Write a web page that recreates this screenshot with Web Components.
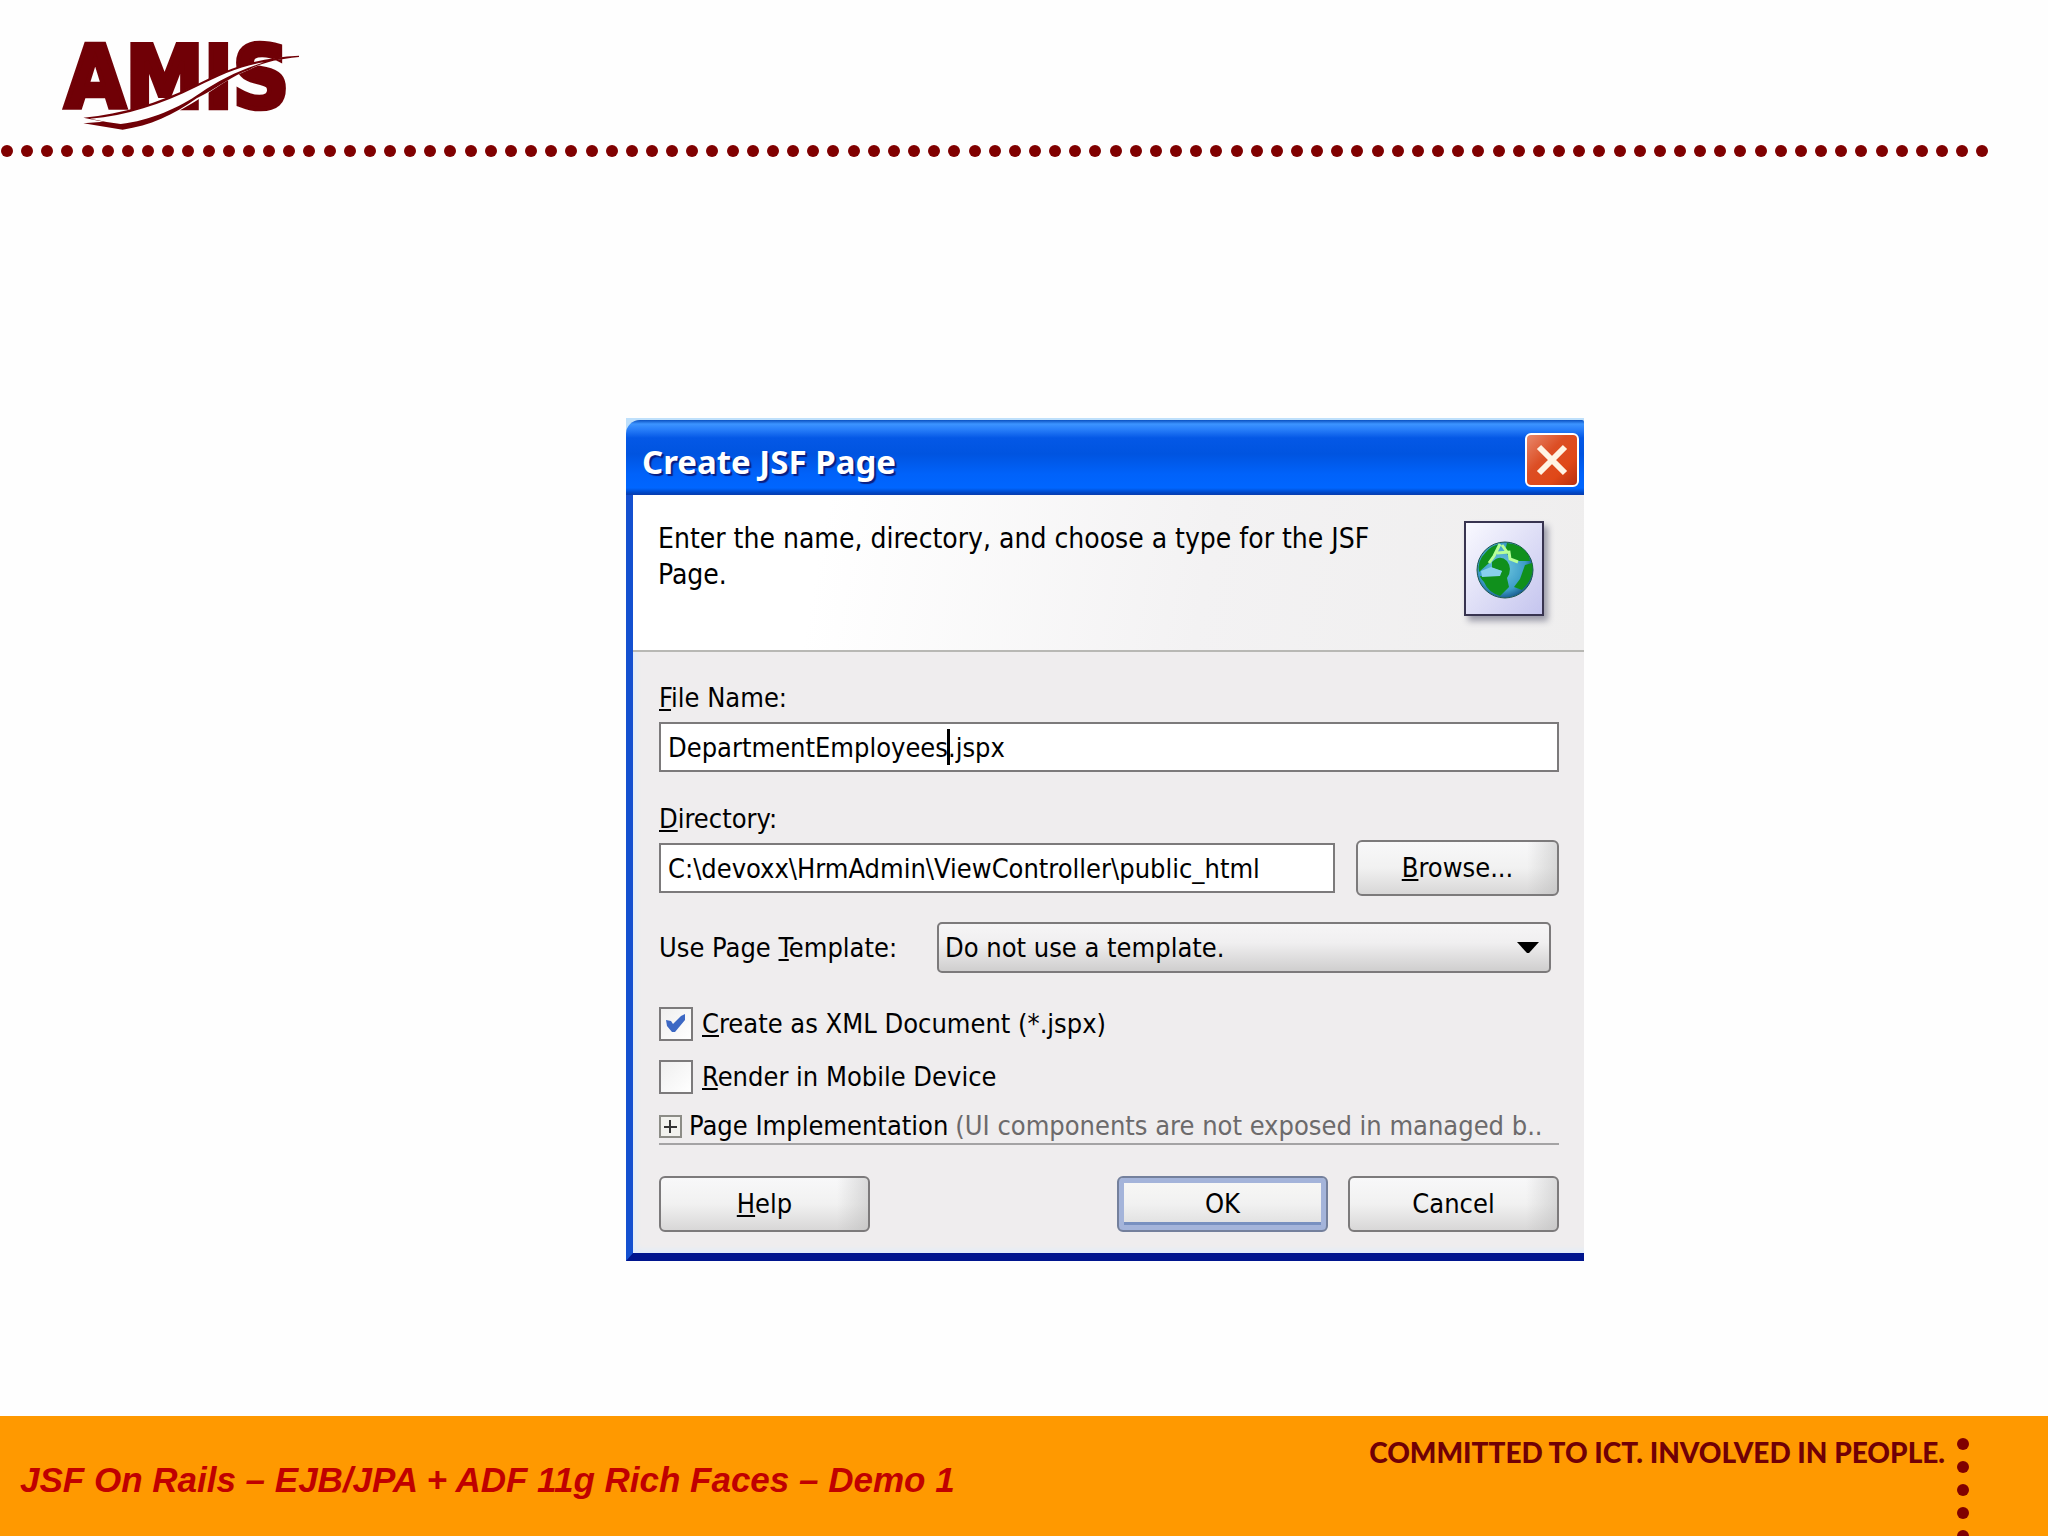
<!DOCTYPE html>
<html lang="en">
<head>
<meta charset="utf-8">
<title>JSF On Rails</title>
<style>
  body {
    margin: 0;
    min-height: 100vh;
    display: grid;
    grid-template-rows: auto 1fr auto;
    background: #fefefe;
    font-family: "Liberation Sans", Arial, sans-serif;
  }
  main {
    display: grid;
    place-items: center;
    padding: 106px 0 0 162px;
  }
</style>
</head>
<body>
  <slide-header></slide-header>
  <main>
    <xp-dialog name="Create JSF Page">
      <span slot="intro">Enter the name, directory, and choose a type for the JSF Page.</span>
      <text-field value="DepartmentEmployees.jspx" caret><u>F</u>ile Name:</text-field>
      <text-field value="C:\devoxx\HrmAdmin\ViewController\public_html"><u>D</u>irectory:
        <push-button slot="side" class="browse"><u>B</u>rowse...</push-button>
      </text-field>
      <select-field option="Do not use a template.">Use Page <u>T</u>emplate:</select-field>
      <check-field checked><u>C</u>reate as XML Document (*.jspx)</check-field>
      <check-field><u>R</u>ender in Mobile Device</check-field>
      <more-section name="Page Implementation">(UI components are not exposed in managed b..</more-section>
      <push-button slot="left"><u>H</u>elp</push-button>
      <push-button slot="right" default>OK</push-button>
      <push-button slot="right">Cancel</push-button>
    </xp-dialog>
  </main>
  <slide-footer>
    JSF On Rails – EJB/JPA + ADF 11g Rich Faces – Demo 1
    <span slot="motto">COMMITTED TO ICT. INVOLVED IN PEOPLE.</span>
  </slide-footer>

<script>
// attaches an open shadow root with the given markup
class BaseElement extends HTMLElement {
  constructor() {
    super();
    const template = document.createElement("template");
    template.innerHTML = this.constructor.html;
    this.attachShadow({ mode: "open" });
    this.shadowRoot.appendChild(template.content.cloneNode(true));
  }
  $(selector) {
    return this.shadowRoot.querySelector(selector);
  }
}

class DotLine extends BaseElement {
  static html = `
    <style>
      :host { display: flex; justify-content: space-between; }
      :host([vertical]) { flex-direction: column; justify-content: flex-start; gap: 11px; }
      i { width: 12px; height: 12px; border-radius: 50%; background: #800000; flex: none; }
    </style>
  `;
  connectedCallback() {
    const count = Number(this.getAttribute("count"));
    for (let i = 0; i < count; i++) {
      this.shadowRoot.appendChild(document.createElement("i"));
    }
  }
}

class AmisLogo extends BaseElement {
  static html = `
    <style>
      :host { display: block; }
      svg { display: block; width: 240px; height: 120px; overflow: visible; }
      text { font: bold 262px "DejaVu Sans Condensed", "DejaVu Sans", sans-serif; }
    </style>
    <svg viewBox="60 0 720 360" fill="#700006" role="img" aria-label="AMIS">
      <text x="74" y="264" stroke="#700006" stroke-width="14">AMIS</text>
      <path fill="#fefefe" d="M128 295C250 284 350 252 460 200C560 150 650 116 777 108C700 120 660 132 628 149C560 172 470 250 400 280L248 318L130 302Z"/>
      <path d="M130 293C250 282 350 250 460 198C560 148 650 112 777 107L777 111C710 118 665 128 628 149C580 165 530 205 470 235C400 285 330 318 248 329L130 310L190 305Z"/>
      <path fill="#fefefe" d="M150 296C260 286 360 254 470 200C540 165 610 135 672 127C600 150 540 178 480 220C420 262 330 303 242 312L200 306Z"/>
    </svg>
  `;
}

class SlideHeader extends BaseElement {
  static html = `
    <style>
      :host { display: block; padding-top: 20px; }
      amis-logo { margin: 0 60px 5px; }
      dot-line { margin: 0 59px 0 1px; }
    </style>
    <amis-logo></amis-logo>
    <dot-line count="99"></dot-line>
  `;
}

class SlideFooter extends BaseElement {
  static html = `
    <style>
      :host {
        display: flex;
        justify-content: space-between;
        height: 120px;
        overflow: hidden;
        background: #ff9900;
      }
      .title {
        margin: 44px 0 0 20px;
        color: #c00000;
        font: italic bold 35px/40px "Liberation Sans", sans-serif;
      }
      .right { display: flex; gap: 12px; margin: 22px 79px 0 0; }
      .motto { color: #700006; font: 900 28px/28px Lato, sans-serif; }
    </style>
    <div class="title"><slot></slot></div>
    <div class="right">
      <div class="motto"><slot name="motto"></slot></div>
      <dot-line vertical count="5"></dot-line>
    </div>
  `;
}

class XpDialog extends BaseElement {
  static html = `
    <style>
      :host {
        display: block;
        width: 100%;
        max-width: 958px;
        box-sizing: border-box;
        background: #bfe0fb;
        padding-top: 2px;
        color: #000;
        font: 27px/36px "DejaVu Sans Condensed", "DejaVu Sans", sans-serif;
      }
      .bar {
        display: flex;
        align-items: center;
        justify-content: space-between;
        height: 75px;
        box-sizing: border-box;
        padding: 4px 5px 0 16px;
        border-radius: 14px 2px 0 0;
        background: linear-gradient(#0a50c0, #3c94ff 4px, #2a80fa 9px, #0458e6 18px, #0054e0 34px, #0062fa 54px, #0066ff 68px, #0044c0 73px, #0a3cae);
      }
      h1 {
        margin: 4px 0 0;
        color: #fff;
        font: bold 33px/40px "Noto Sans", sans-serif;
        text-shadow: 2px 2px 1px #0a1e80;
      }
      .close {
        width: 54px;
        height: 54px;
        padding: 0;
        border: 2px solid #fff;
        border-radius: 6px;
        background: linear-gradient(135deg, #e8886c, #dc4e24 40%, #e04818 70%, #b83010);
      }
      .close svg { display: block; margin: auto; }
      .body {
        border: solid;
        border-width: 0 0 8px 7px;
        border-color: #001590 #001590 #00158e #1450d0;
        background: #efedee;
        box-shadow: inset 5px -5px 6px -3px #dcecfd;
      }
      .intro {
        display: flex;
        justify-content: space-between;
        height: 157px;
        padding: 26px 39px 0 25px;
        box-sizing: border-box;
        background: linear-gradient(100deg, #fff 20%, #f3f2f3 60%, #efeeee);
        border-bottom: 2px solid #b8b8b4;
      }
      .intro p { margin: 0; max-width: 740px; font-size: 28px; }
      .form { padding: 28px 25px 21px 26px; }
      .actions { display: flex; gap: 20px; margin-top: 31px; }
      .left { flex: 1; }
    </style>
    <div class="bar">
      <h1></h1>
      <button class="close" aria-label="Close">
        <svg width="36" height="36" viewBox="0 0 36 36" stroke="#fff4e4" stroke-width="6"><path d="M5 5L31 31M31 5L5 31"/></svg>
      </button>
    </div>
    <div class="body">
      <div class="intro">
        <p><slot name="intro"></slot></p>
        <page-icon></page-icon>
      </div>
      <div class="form">
        <slot></slot>
        <div class="actions">
          <div class="left"><slot name="left"></slot></div>
          <slot name="right"></slot>
        </div>
      </div>
    </div>
  `;
  connectedCallback() {
    this.$("h1").textContent = this.getAttribute("name");
  }
}

class PageIcon extends BaseElement {
  static html = `
    <style>
      :host { display: block; }
      svg { display: block; filter: drop-shadow(4px 5px 3px #9a9aa8); }
    </style>
    <svg width="81" height="96" viewBox="0 0 81 96">
      <defs>
        <linearGradient id="sheet" x1="0" y1="0" x2="1" y2="1">
          <stop offset="0" stop-color="#fafaff"/><stop offset="1" stop-color="#c4c4ee"/>
        </linearGradient>
        <radialGradient id="sea" cx=".45" cy=".45" r=".6">
          <stop offset="0" stop-color="#70c8e0"/><stop offset=".7" stop-color="#3c9cc8"/><stop offset="1" stop-color="#104c80"/>
        </radialGradient>
      </defs>
      <rect x="1" y="1" width="78" height="93" fill="url(#sheet)" stroke="#383450" stroke-width="2"/>
      <circle cx="41" cy="49" r="28" fill="url(#sea)" stroke="#1c5850" stroke-width="1"/>
      <g fill="#10901c">
        <path d="M22 31Q28 24 36 23L30 33L25 42L15 51Q13 40 22 31Z"/>
        <path d="M43 22Q58 23 65 35L66 40H48L41 30Z"/>
        <path d="M28 41Q36 33 43 40Q49 48 43 57L45 66L36 75Q24 71 20 61Q14 54 17 55H34L38 50L28 47Z"/>
        <path d="M61 44L68 42Q71 57 58 69L50 66L56 58Z"/>
      </g>
      <path d="M36 23L30 35L25 42M33 32L45 31L46 38L54 41M38 24L43 31" fill="none" stroke="#b8ff98" stroke-width="3"/>
      <path d="M17 50L27 46L38 50L36 55L18 56Z" fill="#88d0ec"/>
    </svg>
  `;
}

class TextField extends BaseElement {
  static html = `
    <style>
      :host { display: block; margin-bottom: 29px; }
      label { display: block; height: 36px; margin-bottom: 6px; }
      .row { display: flex; align-items: center; gap: 21px; height: 50px; }
      .box { flex: 1; position: relative; }
      input {
        display: block;
        width: 100%;
        height: 50px;
        box-sizing: border-box;
        padding: 0 7px;
        border: 2px solid #7c7a7b;
        border-radius: 0;
        background: #fff;
        color: #000;
        font: inherit;
      }
      .caret { display: none; position: absolute; left: 288px; top: 7px; width: 3px; height: 36px; background: #000; }
      :host([caret]) .caret { display: block; }
    </style>
    <label for="box"><slot></slot></label>
    <div class="row">
      <div class="box"><input id="box" type="text"><span class="caret"></span></div>
      <slot name="side"></slot>
    </div>
  `;
  connectedCallback() {
    this.$("input").value = this.getAttribute("value");
  }
}

class SelectField extends BaseElement {
  static html = `
    <style>
      :host { display: flex; align-items: center; margin: 0 8px 33px 0; }
      label { width: 278px; flex: none; }
      .box { flex: 1; position: relative; }
      select {
        appearance: none;
        display: block;
        width: 100%;
        height: 51px;
        box-sizing: border-box;
        padding: 0 6px;
        border: 2px solid #7c7a7b;
        border-radius: 5px;
        background: linear-gradient(#f6f5f6, #f0eff0 40%, #cfcece);
        color: #000;
        font: inherit;
      }
      svg { position: absolute; right: 12px; top: 20px; pointer-events: none; }
    </style>
    <label for="box"><slot></slot></label>
    <div class="box">
      <select id="box"><option></option></select>
      <svg width="22" height="12" viewBox="0 0 22 12"><path d="M0 0H22L12 11H10Z"/></svg>
    </div>
  `;
  connectedCallback() {
    this.$("option").textContent = this.getAttribute("option");
  }
}

class CheckField extends BaseElement {
  static html = `
    <style>
      :host { display: flex; align-items: center; gap: 9px; margin-top: 17px; }
      .box { position: relative; }
      input {
        appearance: none;
        display: block;
        width: 34px;
        height: 34px;
        margin: 0;
        border: 2px solid #7c7a7b;
        background: linear-gradient(135deg, #efefef, #fff);
      }
      svg { display: none; position: absolute; left: 7px; top: 7px; pointer-events: none; }
      input:checked + svg { display: block; }
    </style>
    <div class="box">
      <input id="box" type="checkbox">
      <svg width="20" height="19" viewBox="0 0 20 19" fill="#3c68c4"><path d="M0 6L5 7L7 10L15 2L19 0V6L9 18H6L1 12Z"/></svg>
    </div>
    <label for="box"><slot></slot></label>
  `;
  connectedCallback() {
    this.$("input").checked = this.hasAttribute("checked");
  }
}

class MoreSection extends BaseElement {
  static html = `
    <style>
      :host { display: block; margin-top: 14px; }
      summary {
        display: flex;
        align-items: center;
        gap: 7px;
        height: 34px;
        border-bottom: 2px solid #a4a3a4;
        white-space: nowrap;
      }
      .hint { color: #6c6a6b; }
    </style>
    <details>
      <summary>
        <svg width="23" height="23" viewBox="0 0 23 23" fill="none">
          <rect x="1" y="1" width="21" height="21" fill="#f2f2ee" stroke="#8c8c86" stroke-width="2"/>
          <path d="M5 12H18M11 5V18" stroke="#333" stroke-width="2"/>
        </svg>
        <span class="name"></span>
        <span class="hint"><slot></slot></span>
      </summary>
    </details>
  `;
  connectedCallback() {
    this.$(".name").textContent = this.getAttribute("name");
  }
}

class PushButton extends BaseElement {
  static html = `
    <style>
      :host { display: block; width: 211px; flex: none; }
      :host(.browse) { width: 203px; }
      button {
        display: block;
        width: 100%;
        height: 56px;
        padding: 0;
        border: 2px solid #7c7a7b;
        border-radius: 6px;
        background: linear-gradient(to right, transparent 85%, #b4b4b470), linear-gradient(#f8f8f9, #f1f1f1 50%, #d8d7d7);
        color: #000;
        font: inherit;
      }
      :host([default]) button {
        border-color: #74809c;
        box-shadow: inset 0 0 0 5px #a4b4da, inset 0 -6px 0 2px #7890c0;
        background: linear-gradient(#f8f8f6, #f1f1f1 50%, #dcdcdc);
      }
    </style>
    <button type="button"><slot></slot></button>
  `;
}

customElements.define("dot-line", DotLine);
customElements.define("amis-logo", AmisLogo);
customElements.define("slide-header", SlideHeader);
customElements.define("slide-footer", SlideFooter);
customElements.define("page-icon", PageIcon);
customElements.define("push-button", PushButton);
customElements.define("text-field", TextField);
customElements.define("select-field", SelectField);
customElements.define("check-field", CheckField);
customElements.define("more-section", MoreSection);
customElements.define("xp-dialog", XpDialog);
</script>
</body>
</html>
